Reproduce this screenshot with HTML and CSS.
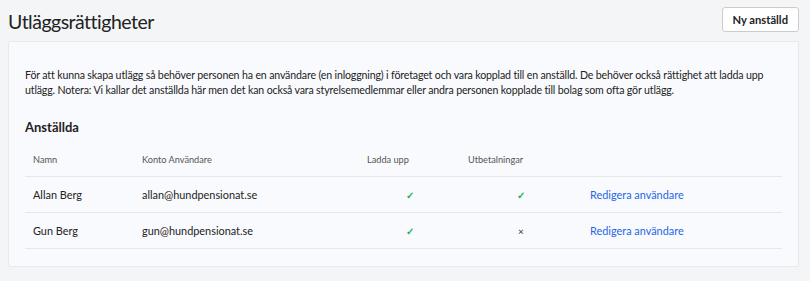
FILE: index.html
```html
<!DOCTYPE html>
<html lang="sv">
<head>
  <meta charset="UTF-8" />
  <title>Utläggsrättigheter</title>
  <link rel="stylesheet" href="styles.css">
</head>
<body>
  <div class="page-header">
    <h1>Utläggsrättigheter</h1>
    <button class="btn">Ny anställd</button>
  </div>

  <div class="card">
    <p class="intro">För att kunna skapa utlägg så behöver personen ha en användare (en inloggning) i företaget och vara kopplad till en anställd. De behöver också rättighet att ladda upp utlägg. Notera: Vi kallar det anställda här men det kan också vara styrelsemedlemmar eller andra personen kopplade till bolag som ofta gör utlägg.</p>

    <h2>Anställda</h2>

    <table class="employees">
      <colgroup>
        <col class="c-name">
        <col class="c-user">
        <col class="c-upload">
        <col class="c-pay">
        <col>
      </colgroup>
      <thead>
        <tr>
          <th>Namn</th>
          <th>Konto Användare</th>
          <th>Ladda upp</th>
          <th>Utbetalningar</th>
          <th></th>
        </tr>
      </thead>
      <tbody>
        <tr>
          <td>Allan Berg</td>
          <td>allan@hundpensionat.se</td>
          <td class="flag yes">&#10003;</td>
          <td class="flag yes">&#10003;</td>
          <td><a href="#">Redigera användare</a></td>
        </tr>
        <tr>
          <td>Gun Berg</td>
          <td>gun@hundpensionat.se</td>
          <td class="flag yes">&#10003;</td>
          <td class="flag no">&#215;</td>
          <td><a href="#">Redigera användare</a></td>
        </tr>
      </tbody>
    </table>
  </div>
</body>
</html>
```

FILE: styles.css
```css
body {
  font-family: Lato, "Open Sans", Arial, sans-serif;
  background-color: #f4f5f7;
  color: #222;
  margin: 0;
  padding: 7px 11px 0 8px;
}
.page-header {
  display: flex;
  justify-content: space-between;
  align-items: flex-start;
  height: 34px;
}
h1 {
  font-size: 19.5px;
  font-weight: 400;
  letter-spacing: -0.5px;
  margin: 0;
  line-height: 29px;
}
.btn {
  font-family: inherit;
  font-size: 11.2px;
  font-weight: 700;
  color: #222;
  background: #fff;
  border: 1px solid #ccc;
  border-radius: 3px;
  padding: 0 10px;
  height: 25px;
}
.card {
  background: #f9fafd;
  border: 1px solid #e8e9ec;
  border-radius: 2px;
  padding: 26px 16px 17px 16px;
}
.intro {
  font-size: 10.6px;
  letter-spacing: -0.15px;
  line-height: 14.5px;
  margin: 0 0 22px 0;
}
h2 {
  font-size: 13px;
  font-weight: 700;
  line-height: 16px;
  margin: 0 0 7px 0;
}
.employees {
  width: 100%;
  border-collapse: collapse;
  table-layout: fixed;
}
.c-name { width: 109px; }
.c-user { width: 225px; }
.c-upload { width: 101px; }
.c-pay { width: 122px; }
.employees th {
  font-size: 9.2px;
  font-weight: 400;
  color: #555;
  text-align: left;
  padding: 0 8px;
  height: 34px;
  border-bottom: 1px solid #e6e7ea;
}
.employees td {
  font-size: 10.9px;
  padding: 0 8px;
  height: 35px;
  border-bottom: 1px solid #e6e7ea;
}
.employees td.flag {
  text-align: center;
  font-size: 10px;
}
.flag.yes { color: #1db36a; font-weight: 700; }
.flag.no { color: #333; font-size: 12px; }
.employees a {
  color: #2466e8;
  text-decoration: none;
}
```
